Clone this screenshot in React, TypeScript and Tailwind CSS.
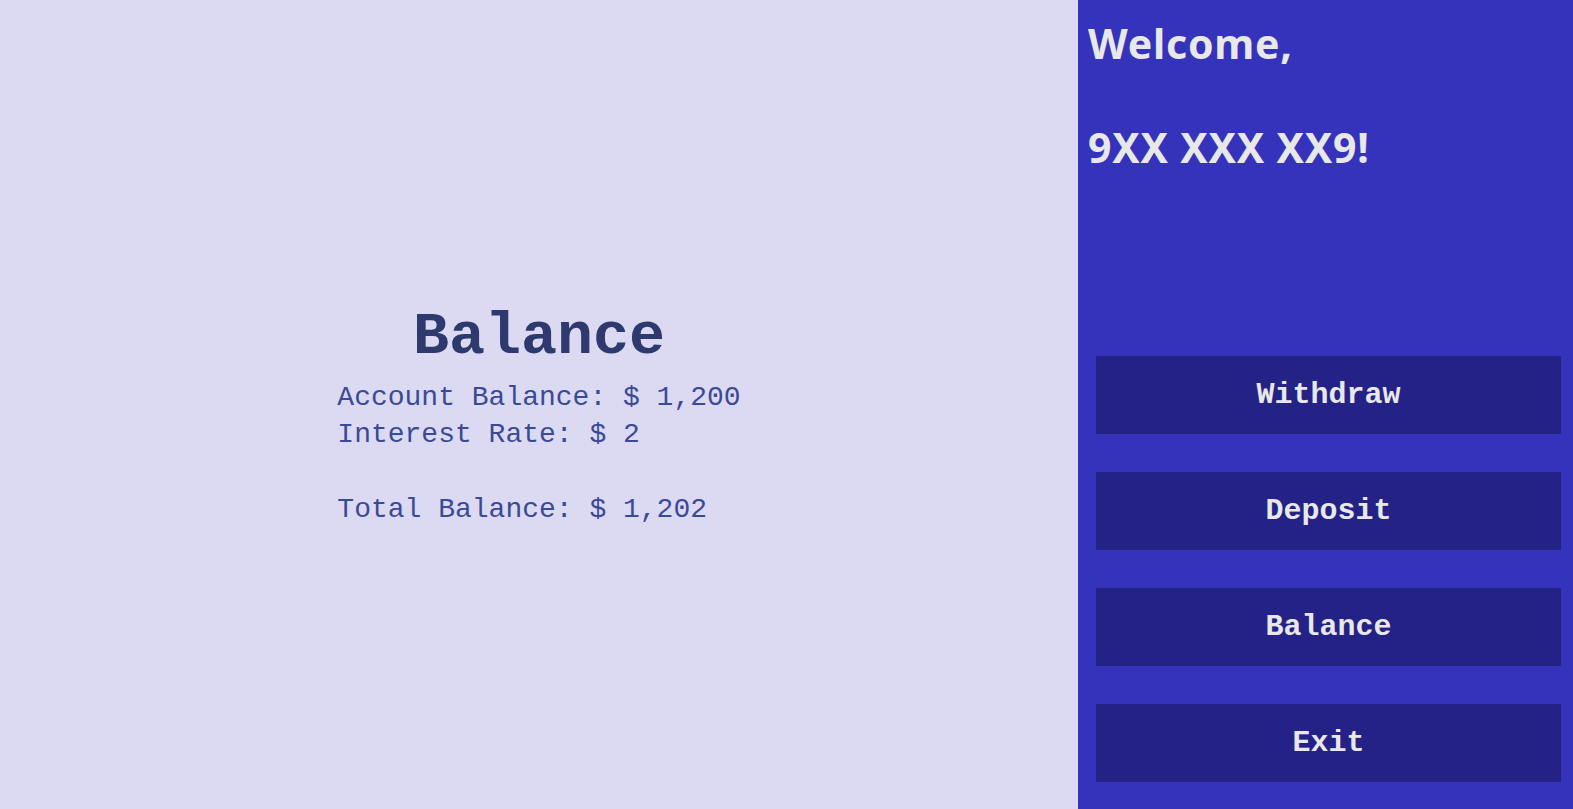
const actions = ['Withdraw', 'Deposit', 'Balance', 'Exit']

const BalanceCard = () => {
  return <div className="flex flex-col text-[#3b4a96]">
    <h1 className="text-center text-[60px] leading-[70px] mb-[7px] font-bold text-[#2e3a6e] font-['Liberation_Mono',monospace]">Balance</h1>
    <div className="text-[28px] leading-[37.5px] font-['Liberation_Mono',monospace]">
      <p>Account Balance: $ 1,200</p>
      <p>Interest Rate: $ 2</p>
      <p>&nbsp;</p>
      <p>Total Balance: $ 1,202</p>
    </div>
  </div>
}

const SideMenu = () => {
  return <div className="w-[495px] shrink-0 h-full bg-[#3532bc] flex flex-col text-[#e8e8e8]">
    <div className="pl-[10px] pt-[17px] text-[41px] leading-[52px] tracking-[0.8px] font-bold font-['Noto_Sans',sans-serif]">
      <p>Welcome,</p>
      <p>&nbsp;</p>
      <p>9XX XXX XX9!</p>
    </div>
    <div className="mt-auto pl-[18px] pr-[12px] pb-[27px] flex flex-col gap-[38px]">
      {actions.map((a) => (
        <button key={a} className="h-[78px] w-full bg-[#242286] text-[30px] font-bold font-['Liberation_Mono',monospace] text-[#e8e8e8]">
          {a}
        </button>
      ))}
    </div>
  </div>
}

export default function App() {
  return <div className="w-full h-[809px] flex bg-[#dbdaf2] overflow-hidden">
    <div className="flex-1 flex items-center justify-center pt-[21px]">
      <BalanceCard />
    </div>
    <SideMenu />
  </div>
}
